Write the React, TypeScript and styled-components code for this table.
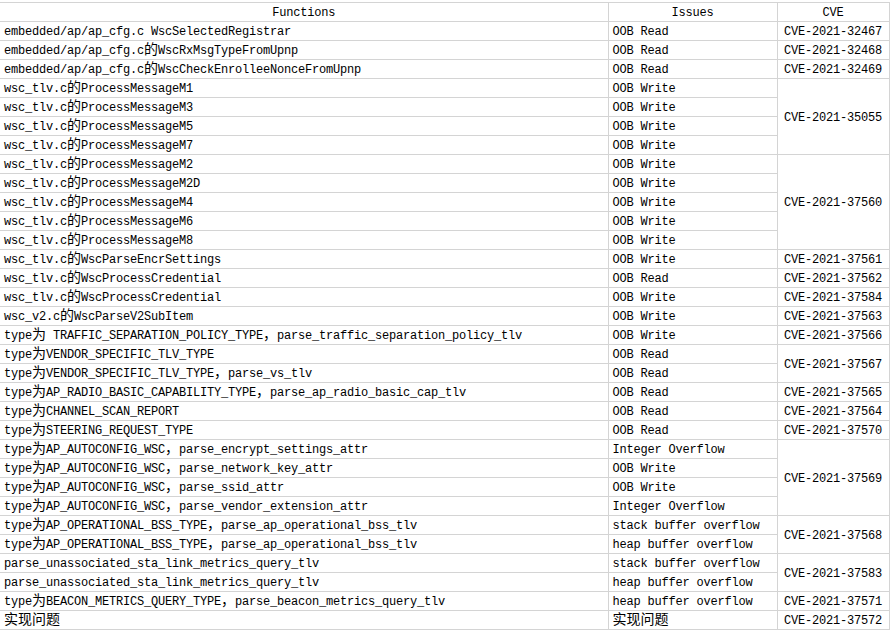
import React from "react";
import styled, { createGlobalStyle } from "styled-components";

interface IRow {
  fn: string;
  issue: string;
  cve?: string;
  span?: number;
}

const rows: IRow[] = [
  { fn: "embedded/ap/ap_cfg.c WscSelectedRegistrar", issue: "OOB Read", cve: "CVE-2021-32467" },
  { fn: "embedded/ap/ap_cfg.c的WscRxMsgTypeFromUpnp", issue: "OOB Read", cve: "CVE-2021-32468" },
  { fn: "embedded/ap/ap_cfg.c的WscCheckEnrolleeNonceFromUpnp", issue: "OOB Read", cve: "CVE-2021-32469" },
  { fn: "wsc_tlv.c的ProcessMessageM1", issue: "OOB Write", cve: "CVE-2021-35055", span: 4 },
  { fn: "wsc_tlv.c的ProcessMessageM3", issue: "OOB Write" },
  { fn: "wsc_tlv.c的ProcessMessageM5", issue: "OOB Write" },
  { fn: "wsc_tlv.c的ProcessMessageM7", issue: "OOB Write" },
  { fn: "wsc_tlv.c的ProcessMessageM2", issue: "OOB Write", cve: "CVE-2021-37560", span: 5 },
  { fn: "wsc_tlv.c的ProcessMessageM2D", issue: "OOB Write" },
  { fn: "wsc_tlv.c的ProcessMessageM4", issue: "OOB Write" },
  { fn: "wsc_tlv.c的ProcessMessageM6", issue: "OOB Write" },
  { fn: "wsc_tlv.c的ProcessMessageM8", issue: "OOB Write" },
  { fn: "wsc_tlv.c的WscParseEncrSettings", issue: "OOB Write", cve: "CVE-2021-37561" },
  { fn: "wsc_tlv.c的WscProcessCredential", issue: "OOB Read", cve: "CVE-2021-37562" },
  { fn: "wsc_tlv.c的WscProcessCredential", issue: "OOB Write", cve: "CVE-2021-37584" },
  { fn: "wsc_v2.c的WscParseV2SubItem", issue: "OOB Write", cve: "CVE-2021-37563" },
  { fn: "type为 TRAFFIC_SEPARATION_POLICY_TYPE，parse_traffic_separation_policy_tlv", issue: "OOB Write", cve: "CVE-2021-37566" },
  { fn: "type为VENDOR_SPECIFIC_TLV_TYPE", issue: "OOB Read", cve: "CVE-2021-37567", span: 2 },
  { fn: "type为VENDOR_SPECIFIC_TLV_TYPE，parse_vs_tlv", issue: "OOB Read" },
  { fn: "type为AP_RADIO_BASIC_CAPABILITY_TYPE，parse_ap_radio_basic_cap_tlv", issue: "OOB Read", cve: "CVE-2021-37565" },
  { fn: "type为CHANNEL_SCAN_REPORT", issue: "OOB Read", cve: "CVE-2021-37564" },
  { fn: "type为STEERING_REQUEST_TYPE", issue: "OOB Read", cve: "CVE-2021-37570" },
  { fn: "type为AP_AUTOCONFIG_WSC，parse_encrypt_settings_attr", issue: "Integer Overflow", cve: "CVE-2021-37569", span: 4 },
  { fn: "type为AP_AUTOCONFIG_WSC，parse_network_key_attr", issue: "OOB Write" },
  { fn: "type为AP_AUTOCONFIG_WSC，parse_ssid_attr", issue: "OOB Write" },
  { fn: "type为AP_AUTOCONFIG_WSC，parse_vendor_extension_attr", issue: "Integer Overflow" },
  { fn: "type为AP_OPERATIONAL_BSS_TYPE，parse_ap_operational_bss_tlv", issue: "stack buffer overflow", cve: "CVE-2021-37568", span: 2 },
  { fn: "type为AP_OPERATIONAL_BSS_TYPE，parse_ap_operational_bss_tlv", issue: "heap buffer overflow" },
  { fn: "parse_unassociated_sta_link_metrics_query_tlv", issue: "stack buffer overflow", cve: "CVE-2021-37583", span: 2 },
  { fn: "parse_unassociated_sta_link_metrics_query_tlv", issue: "heap buffer overflow" },
  { fn: "type为BEACON_METRICS_QUERY_TYPE，parse_beacon_metrics_query_tlv", issue: "heap buffer overflow", cve: "CVE-2021-37571" },
  { fn: "实现问题", issue: "实现问题", cve: "CVE-2021-37572" },
];

// wide glyphs get their own span so they keep a full 14px cell
function Mixed({ text }: { text: string }) {
  const parts = text.split(/([\u3000-\u9fff\uff00-\uffef]+)/);
  return (
    <>
      {parts.map((p, i) =>
        i % 2 === 1 ? <Wide key={i}>{p}</Wide> : <React.Fragment key={i}>{p}</React.Fragment>
      )}
    </>
  );
}

function App() {
  return (
    <>
      <GlobalStyle />
      <Table>
        <colgroup>
          <col style={{ width: 608 }} />
          <col style={{ width: 169 }} />
          <col style={{ width: 112 }} />
        </colgroup>
        <thead>
          <tr>
            <Head>Functions</Head>
            <Head>Issues</Head>
            <Head>CVE</Head>
          </tr>
        </thead>
        <tbody>
          {rows.map((r, i) => (
            <tr key={i}>
              <Cell $first><Mixed text={r.fn} /></Cell>
              <Cell><Mixed text={r.issue} /></Cell>
              {r.cve && <CveCell rowSpan={r.span || 1}>{r.cve}</CveCell>}
            </tr>
          ))}
        </tbody>
      </Table>
    </>
  );
}

export default App;

const GlobalStyle = createGlobalStyle`
  body {
    margin: 0;
    background: #ffffff;
  }
`

const Table = styled.table`
  margin-top: 2px;
  width: 889px;
  table-layout: fixed;
  border-collapse: collapse;
  font-family: "Liberation Mono", "Noto Sans CJK SC", monospace;
  font-size: 12px;
  letter-spacing: -0.2px;
  color: #000000;
`

const Cell = styled.td<{ $first?: boolean }>`
  height: 16px;
  padding: 2px 0 0 4px;
  line-height: 16px;
  white-space: nowrap;
  border: 1px solid #d4d4d4;
  border-left: ${(p) => (p.$first ? "none" : "1px solid #d4d4d4")};
`

const Head = styled.th`
  height: 16px;
  padding: 2px 0 0;
  line-height: 16px;
  font-weight: normal;
  text-align: center;
  border: 1px solid #d4d4d4;
  &:first-child {
    border-left: none;
  }
`

const CveCell = styled.td`
  padding: 2px 0 0;
  line-height: 16px;
  text-align: center;
  vertical-align: middle;
  white-space: nowrap;
  border: 1px solid #d4d4d4;
`

const Wide = styled.span`
  font-family: "Noto Sans CJK SC", sans-serif;
  font-size: 14px;
  letter-spacing: 0;
  line-height: 0;
`
